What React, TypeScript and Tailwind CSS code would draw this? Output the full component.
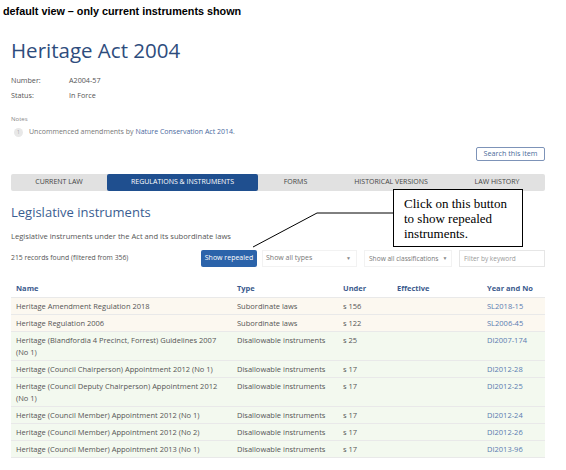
import React from "react";

type Row = {
  name: string;
  type: string;
  under: string;
  year: string;
};

const rows: Row[] = [
  { name: "Heritage Amendment Regulation 2018", type: "Subordinate laws", under: "s 156", year: "SL2018-15" },
  { name: "Heritage Regulation 2006", type: "Subordinate laws", under: "s 122", year: "SL2006-45" },
  {
    name: "Heritage (Blandfordia 4 Precinct, Forrest) Guidelines 2007 (No 1)",
    type: "Disallowable instruments",
    under: "s 25",
    year: "DI2007-174",
  },
  { name: "Heritage (Council Chairperson) Appointment 2012 (No 1)", type: "Disallowable instruments", under: "s 17", year: "DI2012-28" },
  {
    name: "Heritage (Council Deputy Chairperson) Appointment 2012 (No 1)",
    type: "Disallowable instruments",
    under: "s 17",
    year: "DI2012-25",
  },
  { name: "Heritage (Council Member) Appointment 2012 (No 1)", type: "Disallowable instruments", under: "s 17", year: "DI2012-24" },
  { name: "Heritage (Council Member) Appointment 2012 (No 2)", type: "Disallowable instruments", under: "s 17", year: "DI2012-26" },
  { name: "Heritage (Council Member) Appointment 2013 (No 1)", type: "Disallowable instruments", under: "s 17", year: "DI2013-96" },
];

const tabs = [
  { label: "CURRENT LAW", w: "w-[96px]" },
  { label: "REGULATIONS & INSTRUMENTS", w: "w-[151px]", active: true },
  { label: "FORMS", w: "w-[75px]" },
  { label: "HISTORICAL VERSIONS", w: "w-[116px]" },
  { label: "LAW HISTORY", w: "w-[96px]" },
];

function Caret() {
  return <span className="text-[5px] text-[#888]">▼</span>;
}

export default function App() {
  return (
    <div className="relative w-[566px] h-[470px] overflow-hidden bg-white font-['Open_Sans',sans-serif] text-[#555]">
      <div className="pt-[4px] pl-[3px] h-[22px] font-['Liberation_Sans',Arial,sans-serif] text-[10.8px] leading-[14px] font-bold text-black">
        default view – only current instruments shown
      </div>

      <div className="ml-[11px] w-[534px]">
        <h1 className="mt-[13px] text-[20.5px] leading-[30px] text-[#2e4c7d]">Heritage Act 2004</h1>

        <div className="mt-[8px] text-[7.2px] leading-[15px] text-[#555]">
          <div className="flex">
            <span className="w-[58px]">Number:</span>
            <span>A2004-57</span>
          </div>
          <div className="flex">
            <span className="w-[58px]">Status:</span>
            <span>In Force</span>
          </div>
        </div>

        <div className="mt-[10px] text-[6px] leading-[12px] text-[#888]">Notes</div>
        <div className="mt-[1px] flex items-center gap-[6px] pl-[3px] text-[7px] leading-[12px] text-[#777]">
          <span className="flex h-[9px] w-[9px] items-center justify-center rounded-full bg-[#e8e8e8] text-[5px] text-[#aaa]">
            1
          </span>
          <span>
            Uncommenced amendments by <span className="text-[#4a6aa0]">Nature Conservation Act 2014</span>.
          </span>
        </div>

        <div className="mt-[9px] flex justify-end">
          <button className="h-[14px] w-[69px] rounded-[2px] border border-[#7d93b8] text-[7.2px] leading-none text-[#4a6a9a]">
            Search this item
          </button>
        </div>

        <div className="mt-[13px] flex h-[17px] rounded-[2px] bg-[#e1e1e1]">
          {tabs.map((t) => (
            <div
              key={t.label}
              className={
                t.active
                  ? `${t.w} flex items-center justify-center rounded-[2px] bg-[#1f4f8f] text-[7px] text-white`
                  : `${t.w} flex items-center justify-center text-[7px] text-[#444]`
              }
            >
              {t.label}
            </div>
          ))}
        </div>

        <h2 className="mt-[11px] text-[13px] leading-[20px] text-[#3a5d91]">Legislative instruments</h2>
        <p className="mt-[8px] text-[7.6px] leading-[12px] text-[#555]">
          Legislative instruments under the Act and its subordinate laws
        </p>

        <div className="mt-[8px] flex h-[17px] items-center justify-between">
          <span className="text-[6.8px] text-[#555]">215 records found (filtered from 356)</span>
          <div className="flex h-full items-stretch whitespace-nowrap">
            <button className="w-[56px] rounded-[2px] bg-[#2b63aa] text-[7px] text-white">Show repealed</button>
            <div className="ml-[5px] flex w-[95px] items-center justify-between border border-[#f2f2f2] pl-[3px] pr-[5px] text-[7px] text-[#777]">
              <span>Show all types</span>
              <Caret />
            </div>
            <div className="ml-[7px] flex w-[88px] items-center gap-[4px] border border-[#f2f2f2] pl-[4px] text-[6.6px] text-[#777]">
              <span>Show all classifications</span>
              <Caret />
            </div>
            <div className="ml-[7px] flex w-[86px] items-center border border-[#e6e6e6] px-[4px] text-[6.5px] text-[#999]">
              Filter by keyword
            </div>
          </div>
        </div>

        <div className="mt-[13px] text-[7.5px]">
          <div className="grid h-[17px] grid-cols-[221px_106px_54px_90px_63px] items-center font-bold text-[#3b5a8d]">
            <span className="pl-[5px]">Name</span>
            <span className="pl-[5px]">Type</span>
            <span className="pl-[5px]">Under</span>
            <span className="pl-[5px]">Effective</span>
            <span className="pl-[5px]">Year and No</span>
          </div>
          {rows.map((r) => (
            <div
              key={r.year}
              className={
                r.type === "Subordinate laws"
                  ? "grid grid-cols-[221px_106px_54px_90px_63px] border-t border-[#e9e9e9] bg-[#fcf8f0] py-[2px] leading-[12px]"
                  : "grid grid-cols-[221px_106px_54px_90px_63px] border-t border-[#e9e9e9] bg-[#f3f9ef] py-[2px] leading-[12px]"
              }
            >
              <span className="pl-[5px] pr-[6px]">{r.name}</span>
              <span className="pl-[5px]">{r.type}</span>
              <span className="pl-[5px]">{r.under}</span>
              <span className="pl-[5px]"></span>
              <span className="pl-[5px] text-[#5a7bb0]">{r.year}</span>
            </div>
          ))}
          <div className="border-t border-[#e9e9e9]"></div>
        </div>
      </div>

      {/* annotation callout */}
      <svg className="absolute left-0 top-0" width="566" height="470">
        <polyline points="253,247 317,213 393,213" fill="none" stroke="black" strokeWidth="1" />
      </svg>
      <div className="absolute left-[393px] top-[189px] h-[58px] w-[130px] border border-black bg-white pl-[10px] pr-[12px] pt-[6px] font-['Liberation_Serif','Times_New_Roman',serif] text-[13px] leading-[15px] text-black">
        Click on this button to show repealed instruments.
      </div>
    </div>
  );
}
